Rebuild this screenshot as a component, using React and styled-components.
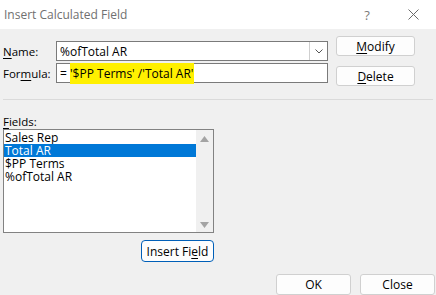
import React from "react";
import styled, { createGlobalStyle } from "styled-components";

const Global = createGlobalStyle`
  html, body {
    margin: 0;
    padding: 0;
    background: #f0f0f0;
  }
  body {
    width: 436px;
    height: 295px;
    overflow: hidden;
    font-family: "Open Sans", "Noto Sans", sans-serif;
    font-size: 11.5px;
    color: #000;
  }
`;

const Dialog = styled.div`
  width: 436px;
  height: 295px;
  display: flex;
  flex-direction: column;
  background: #f0f0f0;
`;

const TitleBar = styled.div`
  height: 29px;
  background: #fff;
  display: flex;
  align-items: center;
  padding-left: 4px;
  color: #707070;
  font-size: 12px;
`;

const Title = styled.div`
  flex: 1;
`;

const TitleButton = styled.div`
  width: 46px;
  display: flex;
  justify-content: center;
  align-items: center;
  color: #7a7a7a;
  font-size: 13px;
`;

const Body = styled.div`
  flex: 1;
  display: flex;
  flex-direction: column;
  padding: 0 0 0 3px;
`;

const Top = styled.div`
  display: flex;
`;

const Form = styled.div`
  display: flex;
  flex-direction: column;
  gap: 2px;
  padding-top: 12px;
`;

const Row = styled.div`
  display: flex;
  align-items: center;
  height: 20px;
`;

const Label = styled.div`
  width: 53px;
`;

const Key = styled.span`
  text-decoration: underline;
  text-underline-offset: 2px;
`;

const Input = styled.div`
  box-sizing: border-box;
  width: 272px;
  height: ${(p) => (p.$tall ? 20 : 19)}px;
  border: 1px solid #7a7a7a;
  background: #fff;
  display: flex;
  align-items: center;
  padding-left: 3px;
  font-size: 12px;
  white-space: nowrap;
`;

const InputText = styled.div`
  flex: 1;
`;

const DropButton = styled.div`
  width: 17px;
  align-self: stretch;
  border-left: 1px solid #cfcfcf;
  display: flex;
  align-items: center;
  justify-content: center;
`;

const Mark = styled.span`
  background: #fff000;
  padding: 2px 1px 2px 0;
`;

const SideButtons = styled.div`
  display: flex;
  flex-direction: column;
  gap: 10px;
  padding: 7px 0 0 8px;
`;

const Button = styled.div`
  box-sizing: border-box;
  width: ${(p) => p.$w}px;
  height: ${(p) => p.$h || 20}px;
  border: 1px solid ${(p) => (p.$focus ? "#005fb8" : "#d0d0d0")};
  border-radius: ${(p) => (p.$focus ? 4 : 3)}px;
  background: #fdfdfd;
  display: flex;
  align-items: center;
  justify-content: center;
  font-size: 12px;
`;

const Separator = styled.div`
  height: 1px;
  background: #dadada;
  margin: 13px 3px 0 0;
`;

const FieldsLabel = styled.div`
  margin-top: 14px;
  height: 15px;
`;

const ListBox = styled.div`
  box-sizing: border-box;
  width: 211px;
  height: 104px;
  margin-top: 0;
  border: 1px solid #828282;
  background: #fff;
  display: flex;
`;

const Items = styled.div`
  flex: 1;
  display: flex;
  flex-direction: column;
  padding-top: 1px;
`;

const Item = styled.div`
  height: 13px;
  line-height: 13px;
  padding-left: 1px;
  font-size: 12px;
  background: ${(p) => (p.$sel ? "#0078d7" : "transparent")};
  color: ${(p) => (p.$sel ? "#fff" : "#000")};
`;

const ScrollBar = styled.div`
  width: 17px;
  background: #f0f0f0;
  display: flex;
  flex-direction: column;
  justify-content: space-between;
  align-items: center;
  padding: 6px 0 4px;
`;

const InsertRow = styled.div`
  width: 211px;
  display: flex;
  justify-content: flex-end;
  padding-top: 7px;
`;

const Footer = styled.div`
  display: flex;
  justify-content: flex-end;
  gap: 9px;
  padding: 12px 1px 0 0;
`;

const Arrow = ({ up }) => (
  <svg width="9" height="6" viewBox="0 0 9 6">
    <path d={up ? "M0 6 L4.5 0 L9 6 Z" : "M0 0 L4.5 6 L9 0 Z"} fill="#a3a3a3" />
  </svg>
);

export default function App() {
  const fields = ["Sales Rep", "Total AR", "$PP Terms", "%ofTotal AR"];
  return (
    <>
      <Global />
      <Dialog>
        <TitleBar>
          <Title>Insert Calculated Field</Title>
          <TitleButton>?</TitleButton>
          <TitleButton>
            <svg width="11" height="11" viewBox="0 0 11 11">
              <path d="M0.5 0.5 L10.5 10.5 M10.5 0.5 L0.5 10.5" stroke="#6a6a6a" strokeWidth="1" />
            </svg>
          </TitleButton>
        </TitleBar>
        <Body>
          <Top>
            <Form>
              <Row>
                <Label><Key>N</Key>ame:</Label>
                <Input $tall>
                  <InputText>%ofTotal AR</InputText>
                  <DropButton>
                    <svg width="8" height="5" viewBox="0 0 8 5">
                      <path d="M0.5 0.5 L4 4 L7.5 0.5" stroke="#555" fill="none" strokeWidth="1" />
                    </svg>
                  </DropButton>
                </Input>
              </Row>
              <Row>
                <Label>For<Key>m</Key>ula:</Label>
                <Input $tall>
                  <InputText>= <Mark>'$PP Terms' /'Total AR'</Mark></InputText>
                </Input>
              </Row>
            </Form>
            <SideButtons>
              <Button $w={79}><span><Key>M</Key>odify</span></Button>
              <Button $w={79}><span><Key>D</Key>elete</span></Button>
            </SideButtons>
          </Top>
          <Separator />
          <FieldsLabel><Key>F</Key>ields:</FieldsLabel>
          <ListBox>
            <Items>
              {fields.map((f, i) => (
                <Item key={f} $sel={i === 1}>{f}</Item>
              ))}
            </Items>
            <ScrollBar>
              <Arrow up />
              <Arrow />
            </ScrollBar>
          </ListBox>
          <InsertRow>
            <Button $w={73} $h={22} $focus><span>Insert Fi<Key>e</Key>ld</span></Button>
          </InsertRow>
          <Footer>
            <Button $w={75} $h={21}>OK</Button>
            <Button $w={75} $h={21}>Close</Button>
          </Footer>
        </Body>
      </Dialog>
    </>
  );
}
